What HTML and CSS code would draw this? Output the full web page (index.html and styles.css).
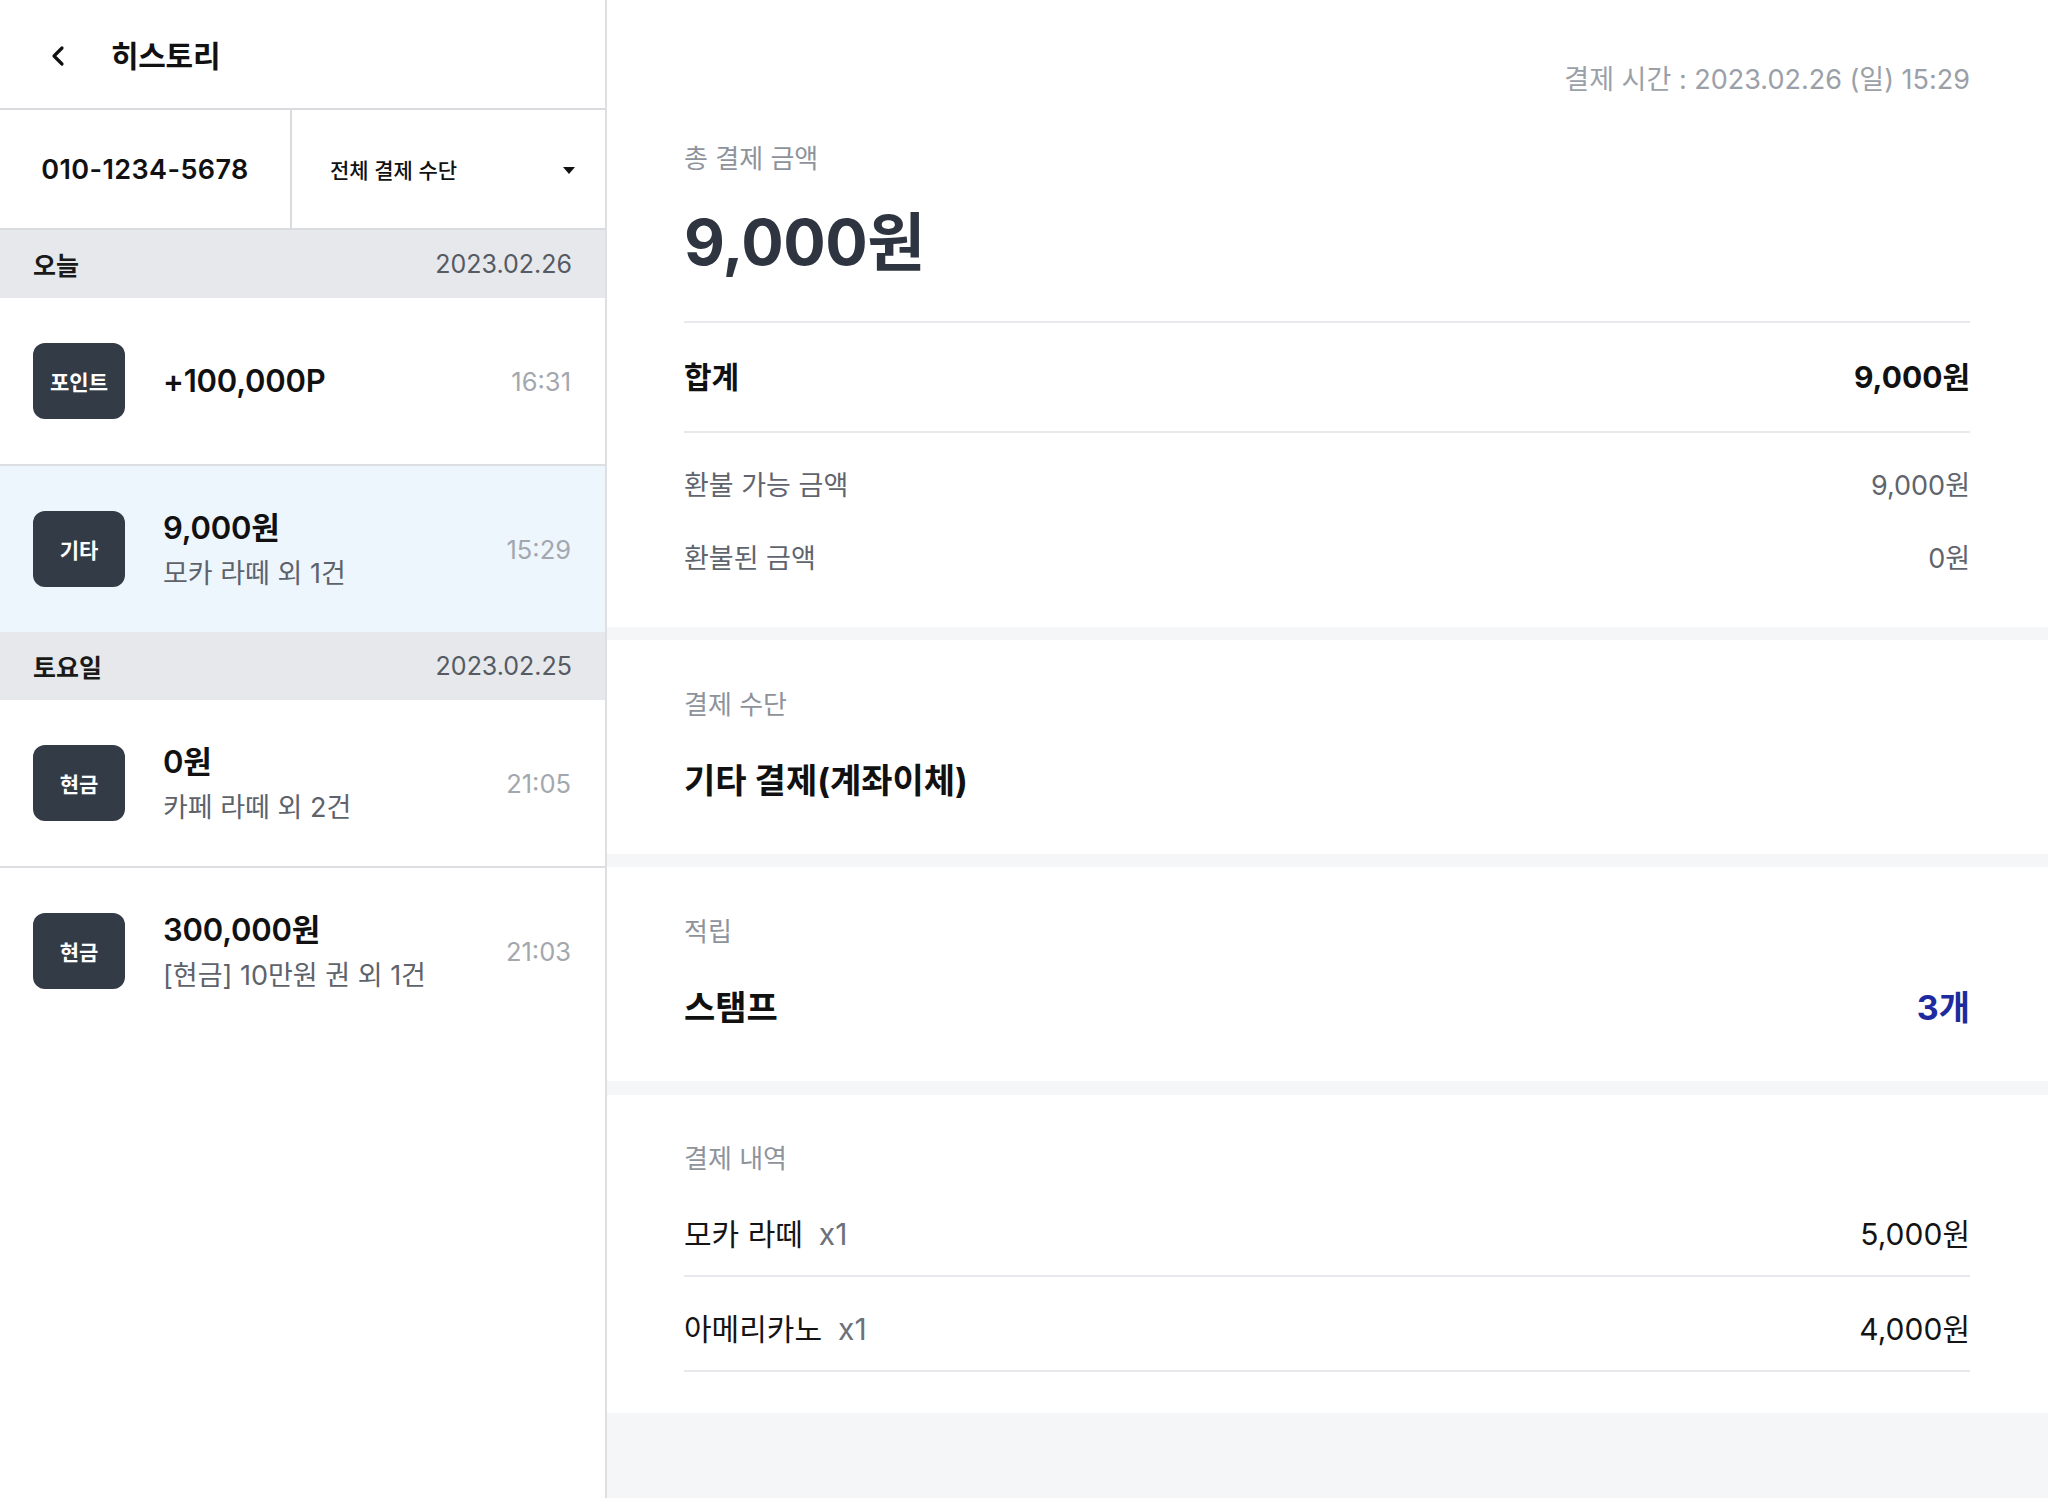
FILE: index.html
```html
<!DOCTYPE html>
<html lang="ko">
<head>
<meta charset="utf-8">
<title>히스토리</title>
<link rel="stylesheet" href="styles.css">
</head>
<body>
<div class="app">
  <aside class="sidebar">
    <header class="topbar">
      <button class="back" aria-label="뒤로">
        <svg width="16" height="22" viewBox="0 0 16 22"><path d="M12 3 L4 11 L12 19" fill="none" stroke="#111" stroke-width="3.2" stroke-linecap="round" stroke-linejoin="round"/></svg>
      </button>
      <h1 class="title">히스토리</h1>
    </header>
    <div class="filters">
      <div class="phone">010-1234-5678</div>
      <div class="select">
        <span>전체 결제 수단</span>
        <svg class="caret" width="12" height="7" viewBox="0 0 12 7"><path d="M0 0 H12 L6 7 Z" fill="#111"/></svg>
      </div>
    </div>

    <div class="group">
      <div class="day"><span class="day-name">오늘</span><span class="day-date">2023.02.26</span></div>
      <div class="item">
        <div class="badge">포인트</div>
        <div class="info single"><div class="amount">+100,000P</div></div>
        <div class="time">16:31</div>
      </div>
      <div class="item selected">
        <div class="badge">기타</div>
        <div class="info"><div class="amount">9,000원</div><div class="desc">모카 라떼 외 1건</div></div>
        <div class="time">15:29</div>
      </div>
    </div>

    <div class="group">
      <div class="day"><span class="day-name">토요일</span><span class="day-date">2023.02.25</span></div>
      <div class="item">
        <div class="badge">현금</div>
        <div class="info"><div class="amount">0원</div><div class="desc">카페 라떼 외 2건</div></div>
        <div class="time">21:05</div>
      </div>
      <div class="item">
        <div class="badge">현금</div>
        <div class="info"><div class="amount">300,000원</div><div class="desc">[현금] 10만원 권 외 1건</div></div>
        <div class="time">21:03</div>
      </div>
    </div>
  </aside>

  <main class="detail">
    <section class="card card-total">
      <div class="paid-at">결제 시간 : 2023.02.26 (일) 15:29</div>
      <div class="label label-total">총 결제 금액</div>
      <div class="big">9,000원</div>
      <div class="sum-row"><span>합계</span><span>9,000원</span></div>
      <div class="refund-rows">
        <div class="refund"><span>환불 가능 금액</span><span>9,000원</span></div>
        <div class="refund"><span>환불된 금액</span><span>0원</span></div>
      </div>
    </section>

    <section class="card card-simple">
      <div class="label">결제 수단</div>
      <div class="value-row"><span>기타 결제(계좌이체)</span></div>
    </section>

    <section class="card card-simple">
      <div class="label">적립</div>
      <div class="value-row"><span>스탬프</span><span class="blue">3개</span></div>
    </section>

    <section class="card card-list">
      <div class="label">결제 내역</div>
      <div class="line-item"><span>모카 라떼<span class="qty">x1</span></span><span>5,000원</span></div>
      <div class="line-item"><span>아메리카노<span class="qty">x1</span></span><span>4,000원</span></div>
    </section>
  </main>
</div>
</body>
</html>
```

FILE: styles.css
```css
* { box-sizing: border-box; }
html, body { margin: 0; padding: 0; }
body {
  font-family: "Inter", "Noto Sans CJK KR", sans-serif;
  color: #111;
  background: #fff;
}
.app {
  display: flex;
  width: 2048px;
  height: 1498px;
  overflow: hidden;
}

/* Sidebar */
.sidebar {
  width: 607px;
  flex: none;
  border-right: 2px solid #dddfe2;
  background: #fff;
}
.topbar {
  height: 110px;
  border-bottom: 2px solid #d9dbde;
  display: flex;
  align-items: center;
  padding: 4px 0 0 50px;
}
.back {
  border: 0;
  background: none;
  padding: 0;
  width: 18px;
  height: 22px;
  display: flex;
  align-items: center;
}
.title {
  margin: 0 0 0 43px;
  font-size: 30px;
  font-weight: 700;
  letter-spacing: -0.3px;
  line-height: 40px;
}
.filters {
  height: 120px;
  border-bottom: 2px solid #d9dbde;
  display: flex;
}
.phone {
  width: 292px;
  border-right: 2px solid #d9dbde;
  display: flex;
  align-items: center;
  justify-content: center;
  font-size: 27px;
  font-weight: 600;
  letter-spacing: 0.4px;
}
.select {
  flex: 1;
  display: flex;
  align-items: center;
  justify-content: space-between;
  padding: 0 30px 0 38px;
  font-size: 21px;
  font-weight: 500;
}
.caret { margin-top: 2px; }

.day {
  height: 68px;
  background: #e6e8eb;
  display: flex;
  align-items: center;
  justify-content: space-between;
  padding: 0 33px;
}
.day-name { font-size: 25px; font-weight: 600; color: #1a1a1a; }
.day-date { font-size: 25px; color: #555a63; }

.item {
  height: 168px;
  display: flex;
  align-items: center;
  padding: 0 34px 0 33px;
  border-bottom: 2px solid #dcdee1;
}
.item:last-child { border-bottom: 0; height: 166px; }
.item.selected { background: #eef6fd; }
.badge {
  width: 92px;
  height: 76px;
  border-radius: 12px;
  background: #333b47;
  color: #fff;
  font-size: 21px;
  font-weight: 700;
  display: flex;
  align-items: center;
  justify-content: center;
  flex: none;
}
.info {
  flex: 1;
  padding-left: 38px;
  padding-top: 4px;
}
.info.single { padding-top: 0; }
.amount {
  font-size: 31px;
  font-weight: 600;
  line-height: 44px;
  letter-spacing: -0.2px;
}
.desc {
  margin-top: 2px;
  font-size: 27px;
  line-height: 44px;
  color: #5d626b;
}
.time {
  font-size: 25.5px;
  color: #a3a7ae;
}

/* Detail */
.detail {
  flex: 1;
  background: #f5f6f8;
  display: flex;
  flex-direction: column;
  gap: 13px;
}
.card {
  background: #fff;
  padding: 0 78px 0 77px;
}
.card-total { padding-top: 60px; padding-bottom: 50px; }
.paid-at {
  text-align: right;
  font-size: 27px;
  line-height: 40px;
  color: #9ba0a8;
}
.label {
  font-size: 26px;
  line-height: 36px;
  color: #8e939b;
}
.label-total { margin-top: 41px; }
.big {
  margin-top: 25px;
  font-size: 63px;
  line-height: 80px;
  font-weight: 700;
  color: #2e3440;
  letter-spacing: -0.5px;
  padding-bottom: 39px;
  border-bottom: 2px solid #e7e9ec;
}
.sum-row {
  height: 110px;
  padding-bottom: 4px;
  display: flex;
  align-items: center;
  justify-content: space-between;
  font-size: 30px;
  font-weight: 700;
  border-bottom: 2px solid #e7e9ec;
}
.refund-rows {
  padding-top: 35px;
  display: flex;
  flex-direction: column;
  gap: 37px;
}
.refund {
  display: flex;
  justify-content: space-between;
  font-size: 27px;
  line-height: 36px;
  color: #5f646d;
}
.card-simple { padding-top: 47px; padding-bottom: 51px; }
.value-row {
  margin-top: 36px;
  display: flex;
  justify-content: space-between;
  font-size: 34px;
  line-height: 44px;
  font-weight: 700;
  color: #111;
}
.blue { color: #1e2b9e; }
.card-list { padding-top: 46px; padding-bottom: 41px; margin-top: 1px; }
.card-list .label { margin-bottom: 5px; }
.line-item {
  display: flex;
  justify-content: space-between;
  font-size: 30px;
  line-height: 40px;
  padding: 32px 0 21px;
  border-bottom: 2px solid #e7e9ec;
  color: #141414;
}
.qty {
  margin-left: 16px;
  color: #6c717a;
}
```
